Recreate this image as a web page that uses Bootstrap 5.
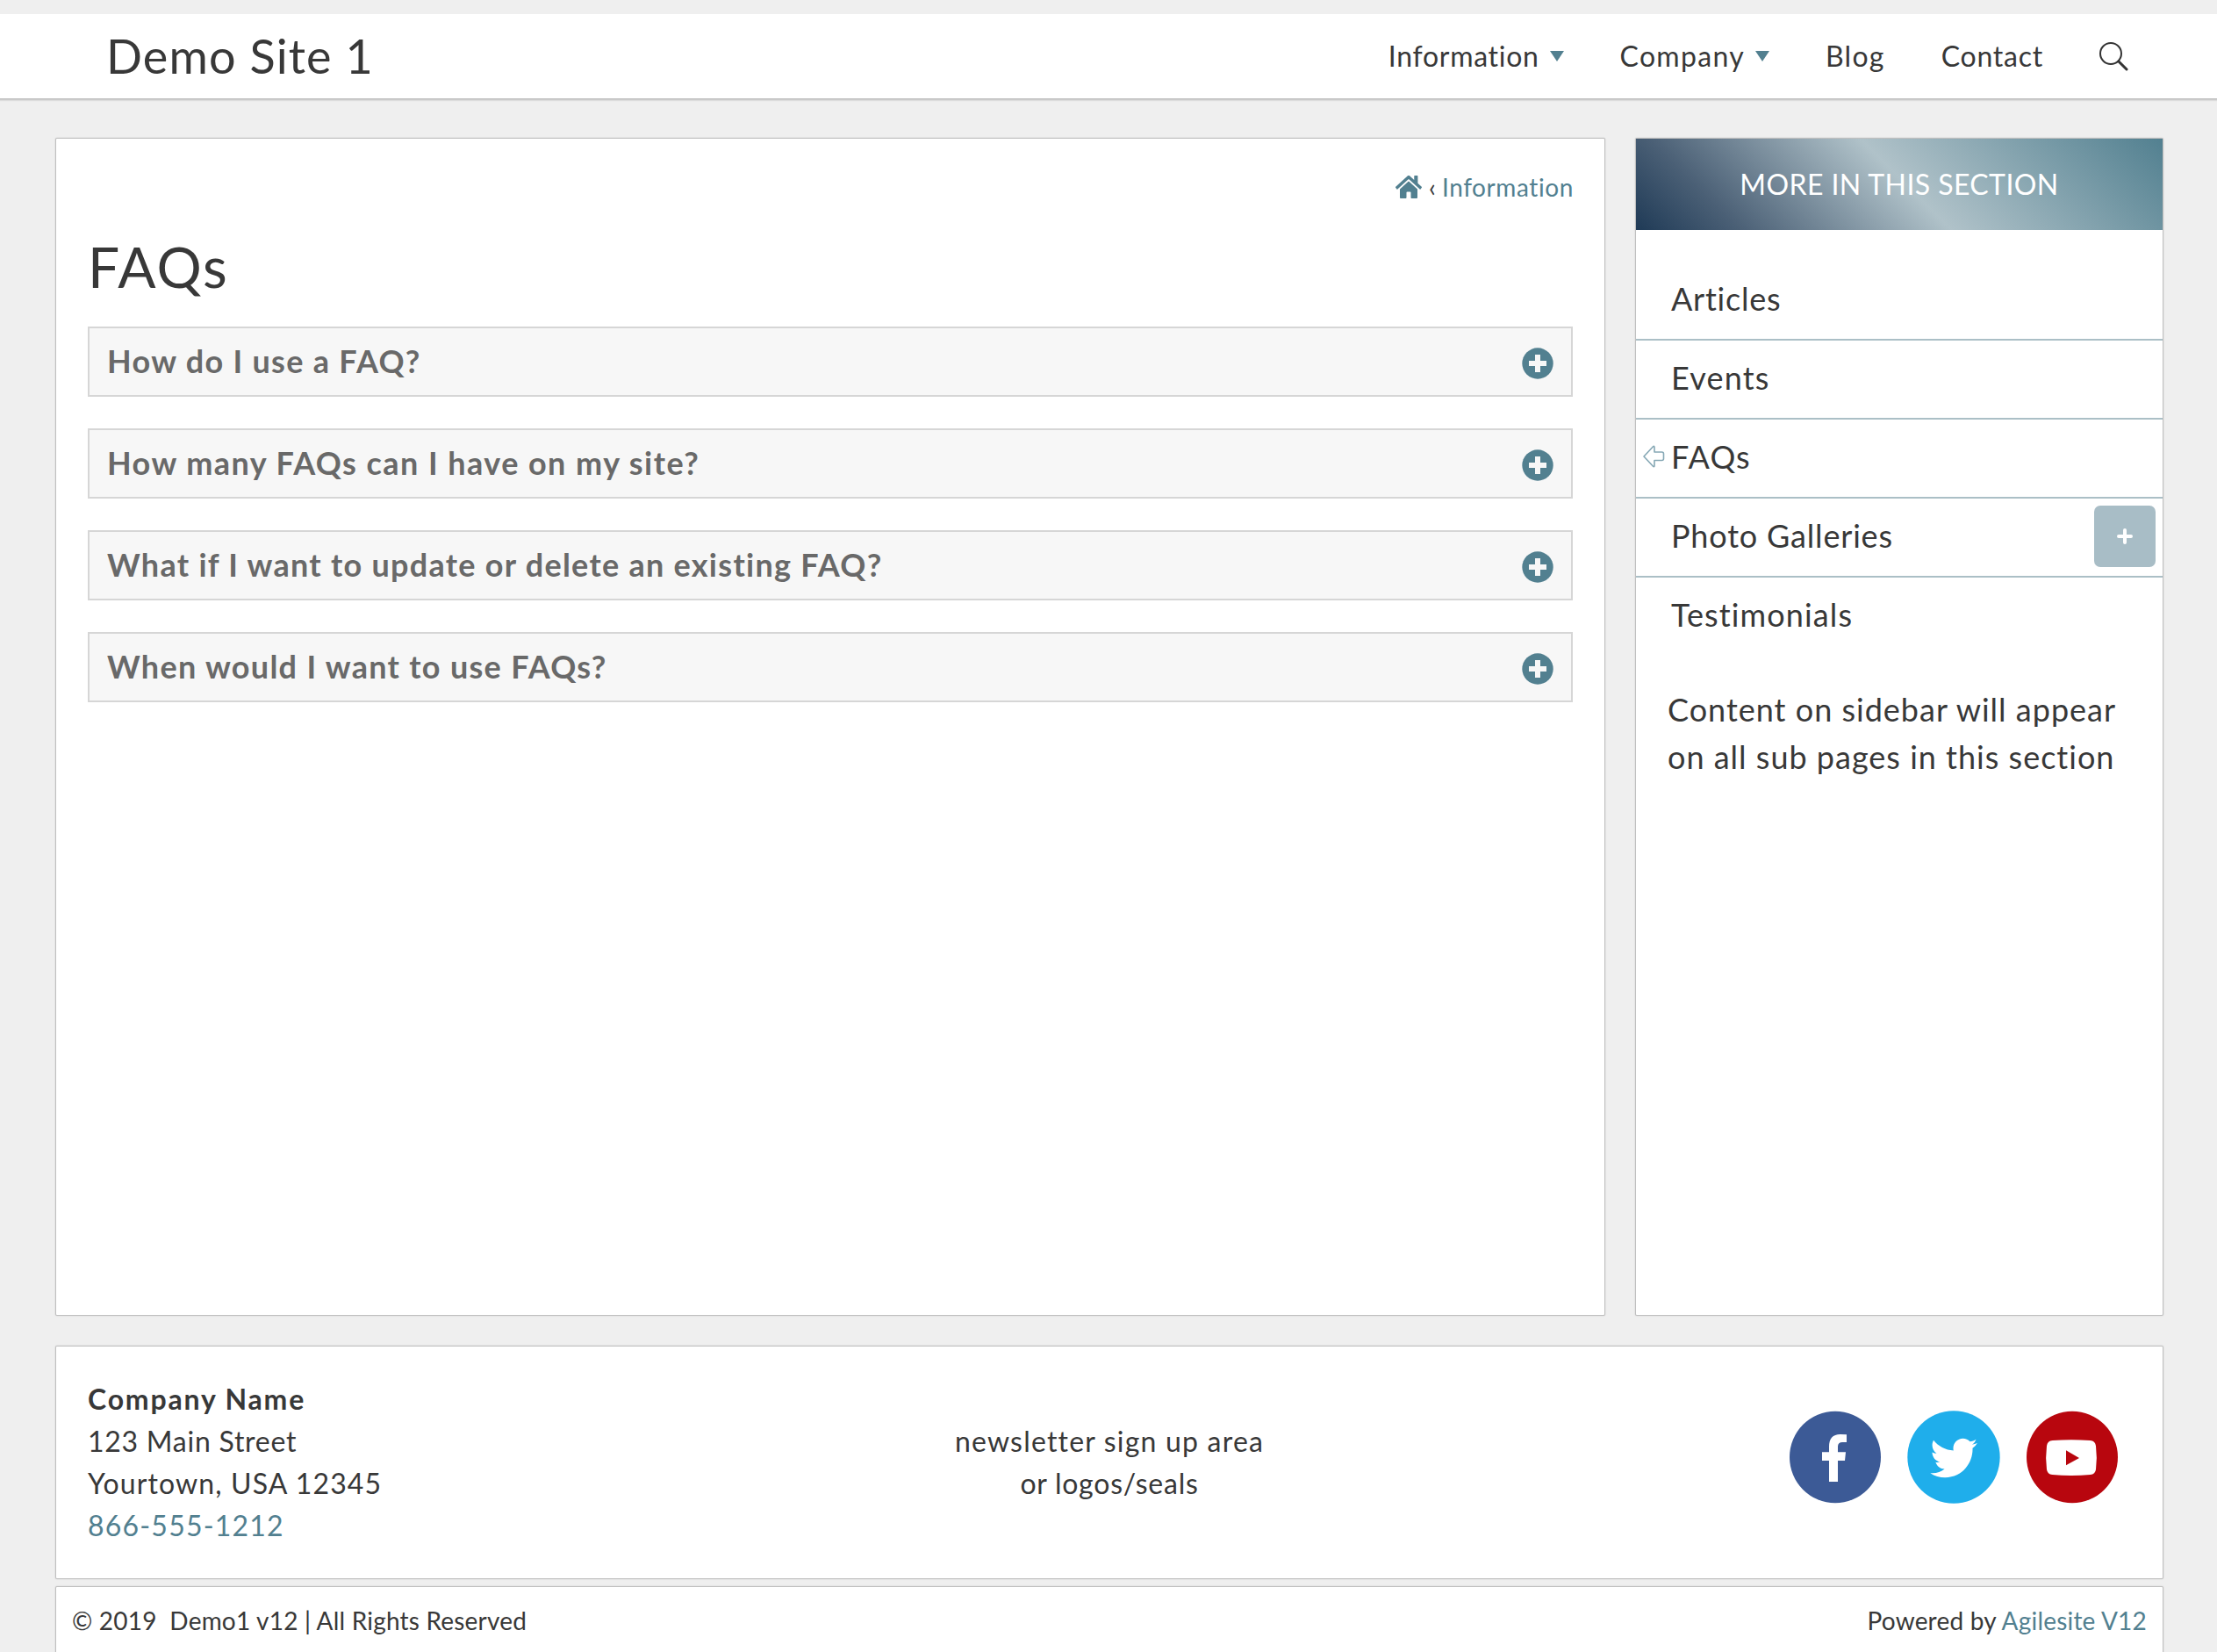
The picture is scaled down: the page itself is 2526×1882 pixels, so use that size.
<!DOCTYPE html>
<html lang="en">
<head>
<meta charset="utf-8">
<title>FAQs - Demo Site 1</title>
<meta name="viewport" content="width=device-width, initial-scale=1">
<link href="https://cdn.jsdelivr.net/npm/bootstrap@5.3.0/dist/css/bootstrap.min.css" rel="stylesheet">
<style>
  :root { --teal: #528090; --mist: #abbfc6; --ink: #383838; }
  body { font-family: Lato, "Open Sans", sans-serif; color: var(--ink); background: #efefef; font-size: 36px; line-height: 54px; height: 100vh; overflow: hidden; font-kerning: normal; }
  a { color: var(--teal); text-decoration: none; }
  svg { display: block; flex: none; }
  .site-head { margin-top: 16px; height: 96px; padding: 0 100px 0 121px; box-shadow: 0 1px 0 #c0c0c0, 0 2px 0 #cacaca, 0 3px 1px #dcdcdc; }
  .site-title { font-size: 54px; line-height: 96px; letter-spacing: 1.09px; color: var(--ink); padding: 0; margin: 0; }
  .site-nav .nav-link { font-size: 32px; line-height: 48px; padding: 0; color: var(--ink); }
  .nav-gap { margin-left: 60px; }
  .shell { width: 2400px; margin: 0 0 0 64px; }
  .panel { background: #fff; box-shadow: 0 0 0 1px #bfbfbf, 0 0 2px 1px rgba(0,0,0,.14); border-radius: 1px; }
  .columns { margin-top: 46px; gap: 36px; height: 1340px; }
  .main-col { width: 1764px; padding: 34px 36px 0; }
  .side-col { width: 600px; }
  .crumbs { font-size: 28px; line-height: 42px; height: 42px; }
  .crumbs a:last-child { letter-spacing: .6px; margin-right: -1px; }
  .crumbs span { padding: 0 7px 0 8px; }
  .page-title { font-size: 64px; line-height: 76px; letter-spacing: 1.89px; margin: 32px 0 30px; font-weight: 400; color: var(--ink); }
  .faq-item { height: 80px; border: 2px solid #d6d6d6; background: #f7f7f7; color: #696969; font-weight: 700; padding: 0 20px; }
  .faq-item span { padding-bottom: 3px; }
  .faq-item svg { margin-top: 3px; }
  .faq-list { gap: 36px; }
  .side-title { height: 104px; font-size: 32px; color: #fff; letter-spacing: .41px; background: linear-gradient(45deg, #1f3a56 0%, #4b6076 17%, #b0c2c9 51%, #528090 100%); }
  .side-nav { padding-top: 36px; }
  .side-nav li { height: 90px; border-bottom: 2px solid var(--mist); padding: 0 8px 4px 40px; position: relative; }
  .side-nav li:last-child { border-bottom: 0; padding-bottom: 6px; }
  .side-nav a { color: var(--ink); }
  .here-arrow { position: absolute; left: 8px; top: 29px; }
  .expand-btn { width: 70px; height: 70px; border-radius: 7px; background: #a8bdc6; border: 0; padding: 0; margin-top: 2px; }
  .side-text { padding: 33px 36px 0; }
  .foot { margin-top: 36px; height: 264px; font-size: 32px; line-height: 48px; padding: 0 51px 0 36px; }
  .foot > div { flex: 1 1 0; }
  .foot .news { padding-left: 15px; }
  .social { gap: 30px; margin-top: -12px; }
  .legal { margin-top: 10px; height: 110px; padding: 17px 18px; font-size: 28px; line-height: 42px; }
  .t-info { letter-spacing: .7px; } .t-comp { letter-spacing: 1.3px; } .t-one { letter-spacing: 1px; }
  .t-faq { letter-spacing: 1.3px; } .t-faq2 { letter-spacing: 1.44px; } .t-faq3 { letter-spacing: 1.27px; } .t-gal { letter-spacing: .82px; } .t-tst { letter-spacing: 1.12px; } .t-news { letter-spacing: 1.2px; }
  .t-low { letter-spacing: .75px; } .t-name { letter-spacing: 1.82px; } .t-legal { letter-spacing: .2px; }
</style>
<script src="https://cdn.jsdelivr.net/npm/bootstrap@5.3.0/dist/js/bootstrap.bundle.min.js"></script>
</head>
<body>
<header class="site-head bg-white d-flex align-items-start justify-content-between">
  <a class="navbar-brand site-title" href="#">Demo Site 1</a>
  <nav class="site-nav d-flex align-items-center h-100">
    <a class="nav-link t-info d-flex align-items-center" href="#">Information
      <svg class="ms-2" width="24" height="12" viewBox="0 0 24 12"><path d="M4 0h16l-8 12z" fill="#528090"/></svg></a>
    <a class="nav-link nav-gap t-comp d-flex align-items-center" href="#">Company
      <svg class="ms-2" width="24" height="12" viewBox="0 0 24 12"><path d="M4 0h16l-8 12z" fill="#528090"/></svg></a>
    <a class="nav-link nav-gap t-comp" href="#">Blog</a>
    <a class="nav-link nav-gap t-low ps-1" href="#">Contact</a>
    <a class="nav-link nav-gap ps-1" href="#" aria-label="Search">
      <svg width="34" height="34" viewBox="0 0 34 34" fill="none" stroke="#333"><circle cx="13" cy="14" r="12" stroke-width="2"/><path d="M22 23l9 9" stroke-width="3" stroke-linecap="round"/></svg></a>
  </nav>
</header>

<div class="shell">
  <div class="columns d-flex">
    <main class="panel main-col">
      <nav class="crumbs d-flex justify-content-end align-items-center">
        <a href="#" aria-label="Home"><svg width="30" height="26" viewBox="0 32 576 448" preserveAspectRatio="none"><path fill="#528090" d="M280.37 148.26L96 300.11V464a16 16 0 0 0 16 16l112.06-.29a16 16 0 0 0 15.92-16V368a16 16 0 0 1 16-16h64a16 16 0 0 1 16 16v95.64a16 16 0 0 0 16 16.05L464 480a16 16 0 0 0 16-16V300L295.67 148.26a12.19 12.19 0 0 0-15.3 0zM571.6 251.47L488 182.56V44.05a12 12 0 0 0-12-12h-56a12 12 0 0 0-12 12v72.61L318.47 43a48 48 0 0 0-61 0L4.34 251.47a12 12 0 0 0-1.6 16.9l25.5 31A12 12 0 0 0 45.15 301l235.22-193.74a12.19 12.19 0 0 1 15.3 0L530.9 301a12 12 0 0 0 16.9-1.6l25.5-31a12 12 0 0 0-1.7-16.93z"/></svg></a>
        <span>‹</span>
        <a href="#">Information</a>
      </nav>
      <h1 class="page-title">FAQs</h1>
      <div class="faq-list d-flex flex-column">
        <div class="faq-item d-flex justify-content-between align-items-center"><span class="t-faq">How do I use a FAQ?</span>
          <svg width="36" height="36" viewBox="0 0 36 36"><circle cx="18" cy="18" r="17.7" fill="#528090"/><path d="M15 8h6v7h7v6h-7v7h-6v-7h-7v-6h7z" fill="#f7f7f7"/></svg></div>
        <div class="faq-item d-flex justify-content-between align-items-center"><span class="t-faq2">How many FAQs can I have on my site?</span>
          <svg width="36" height="36" viewBox="0 0 36 36"><circle cx="18" cy="18" r="17.7" fill="#528090"/><path d="M15 8h6v7h7v6h-7v7h-6v-7h-7v-6h7z" fill="#f7f7f7"/></svg></div>
        <div class="faq-item d-flex justify-content-between align-items-center"><span class="t-faq3">What if I want to update or delete an existing FAQ?</span>
          <svg width="36" height="36" viewBox="0 0 36 36"><circle cx="18" cy="18" r="17.7" fill="#528090"/><path d="M15 8h6v7h7v6h-7v7h-6v-7h-7v-6h7z" fill="#f7f7f7"/></svg></div>
        <div class="faq-item d-flex justify-content-between align-items-center"><span class="t-faq">When would I want to use FAQs?</span>
          <svg width="36" height="36" viewBox="0 0 36 36"><circle cx="18" cy="18" r="17.7" fill="#528090"/><path d="M15 8h6v7h7v6h-7v7h-6v-7h-7v-6h7z" fill="#f7f7f7"/></svg></div>
      </div>
    </main>

    <aside class="panel side-col">
      <div class="side-title d-flex align-items-center justify-content-center text-uppercase">More in this section</div>
      <ul class="side-nav list-unstyled mb-0">
        <li class="d-flex align-items-center"><a class="t-low" href="#">Articles</a></li>
        <li class="d-flex align-items-center"><a class="t-news" href="#">Events</a></li>
        <li class="d-flex align-items-center">
          <svg class="here-arrow" width="25" height="26" viewBox="0 0 25 26" fill="none" stroke="#86a8b5" stroke-width="1.6" stroke-linejoin="round"><path d="M1 13L11.500 1.700Q13 .700 13 2.500V8H21.500Q23.500 8 23.500 10V15.500Q23.500 17.500 21.500 17.500H13V23.500Q13 25.300 11.500 24.300Z"/></svg>
          <a class="t-news" href="#">FAQs</a></li>
        <li class="d-flex align-items-center justify-content-between"><a class="t-gal" href="#">Photo Galleries</a>
          <button class="expand-btn d-flex align-items-center justify-content-center" aria-label="Expand"><svg width="18" height="18" viewBox="0 0 18 18" stroke="#fff" stroke-width="4" stroke-linecap="round"><path d="M9 2v14M2 9h14"/></svg></button></li>
        <li class="d-flex align-items-center"><a class="t-tst" href="#">Testimonials</a></li>
      </ul>
      <div class="side-text t-one">Content on sidebar will appear<br>on all sub pages in this section</div>
    </aside>
  </div>

  <footer>
    <div class="panel foot d-flex align-items-center">
      <div><strong class="t-name">Company Name</strong><br><span class="t-low">123 Main Street</span><br><span class="t-tst">Yourtown, USA 12345</span><br><a class="t-news" href="#">866-555-1212</a></div>
      <div class="news text-center"><span class="t-news">newsletter sign up area</span><br><span class="t-low">or logos/seals</span></div>
      <div class="social d-flex justify-content-end">
        <a href="#" aria-label="Facebook"><svg width="104" height="106" viewBox="27 36 312 318"><ellipse cx="183" cy="195" rx="156" ry="157" fill="#3c5a96"/><path fill="#fff" d="M222 118v26h-14q-16 0-16 15v19h27l-3 29h-24v72h-30v-72h-24v-29h24v-19q0-42 38-42 12 0 22 1z"/></svg></a>
        <a href="#" aria-label="Twitter"><svg width="106" height="106" viewBox="429 36 318 318"><circle cx="588" cy="195" r="158" fill="#1faeeb"/><g transform="translate(508 116) scale(.3145 .32)"><path fill="#fff" d="M459.370 151.716c.325 4.548.325 9.097.325 13.645 0 138.720-105.583 298.558-298.558 298.558-59.452 0-114.680-17.219-161.137-47.106 8.447.974 16.568 1.299 25.340 1.299 49.055 0 94.213-16.568 130.274-44.832-46.132-.975-84.792-31.188-98.112-72.772 6.498.974 12.995 1.624 19.818 1.624 9.421 0 18.843-1.300 27.614-3.573-48.081-9.747-84.143-51.980-84.143-102.985v-1.299c13.969 7.797 30.214 12.670 47.431 13.319-28.264-18.843-46.781-51.005-46.781-87.391 0-19.492 5.197-37.360 14.294-52.954 51.655 63.675 129.300 105.258 216.365 109.807-1.624-7.797-2.599-15.918-2.599-24.040 0-57.828 46.782-104.934 104.934-104.934 30.213 0 57.502 12.670 76.670 33.137 23.715-4.548 46.456-13.320 66.599-25.340-7.798 24.366-24.366 44.833-46.132 57.827 21.117-2.273 41.584-8.122 60.426-16.243-14.292 20.791-32.161 39.308-52.628 54.253z"/></g></svg></a>
        <a href="#" aria-label="YouTube"><svg width="104" height="106" viewBox="837 36 312 318"><ellipse cx="993" cy="195" rx="156" ry="157" fill="#b8060e"/><path fill="#fff" d="M926 138q64-4 128 0 18 1 20 19 5 41 0 80-2 17-19 18-65 6-130 0-17-1-19-18-5-40 0-80 2-18 20-19z"/><path fill="#b8060e" d="M972 172l45 26-45 25z"/></svg></a>
      </div>
    </div>
    <div class="panel legal d-flex justify-content-between">
      <span class="t-legal">© 2019&nbsp; Demo1 v12 | All Rights Reserved</span>
      <span class="t-legal">Powered by <a href="#">Agilesite V12</a></span>
    </div>
  </footer>
</div>
</body>
</html>
